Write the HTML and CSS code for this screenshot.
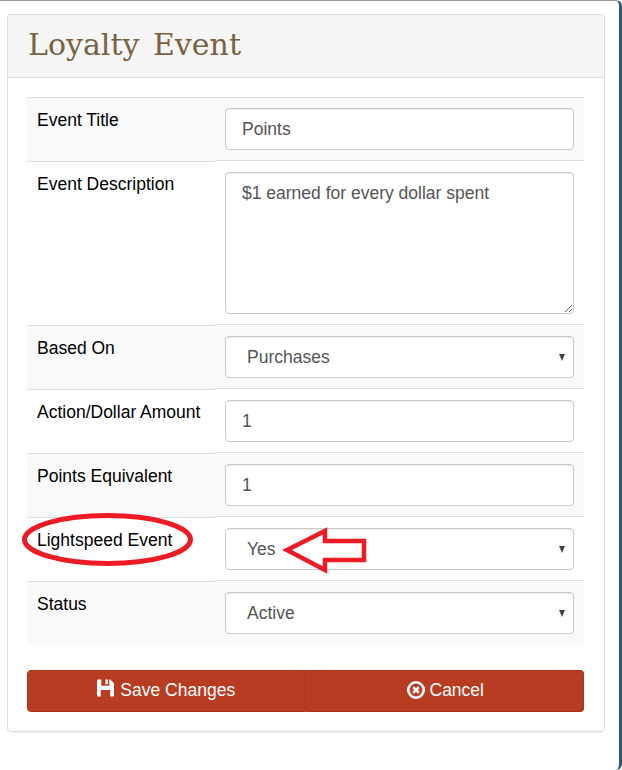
FILE: index.html
```html
<!DOCTYPE html>
<html lang="en">
<head>
<meta charset="utf-8">
<title>Loyalty Event</title>
<link rel="stylesheet" href="styles.css">
</head>
<body>
<div class="window">
  <div class="panel">
    <div class="panel-heading"><h1 class="title">Loyalty Event</h1></div>
    <div class="panel-body">
      <div class="table">
        <div class="row odd"><div class="label">Event Title</div><div class="field"><input class="control" value="Points"></div></div>
        <div class="row"><div class="label">Event Description</div><div class="field"><textarea class="control area">$1 earned for every dollar spent</textarea></div></div>
        <div class="row odd"><div class="label">Based On</div><div class="field"><div class="control select"><span class="sel-text">Purchases</span><span class="caret"></span></div></div></div>
        <div class="row"><div class="label">Action/Dollar Amount</div><div class="field"><input class="control" value="1"></div></div>
        <div class="row odd"><div class="label">Points Equivalent</div><div class="field"><input class="control" value="1"></div></div>
        <div class="row"><div class="label">Lightspeed Event</div><div class="field"><div class="control select"><span class="sel-text">Yes</span><span class="caret"></span></div></div></div>
        <div class="row odd"><div class="label">Status</div><div class="field"><div class="control select"><span class="sel-text">Active</span><span class="caret"></span></div></div></div>
      </div>
      <div class="actions">
        <button class="btn">
          <svg class="icon icon-save" viewBox="0 0 18 18"><path fill="#fff" fill-rule="evenodd" d="M1 0h13l4 4v13a1 1 0 0 1-1 1H1a1 1 0 0 1-1-1V1a1 1 0 0 1 1-1zM4.500 0v6.500h8.500V0h-1.500v5H9V0zM4 11v7h10v-7z"/></svg>
          Save Changes
        </button>
        <button class="btn btn-cancel">
          <svg class="icon icon-cancel" viewBox="0 0 18 18"><circle cx="9" cy="9" r="7.700" fill="none" stroke="#fff" stroke-width="2.600"/><path d="M6.200 6.200l5.600 5.600M11.800 6.200l-5.600 5.600" stroke="#fff" stroke-width="2.600"/></svg>
          Cancel
        </button>
      </div>
    </div>
  </div>
</div>
<svg class="markup" viewBox="0 0 622 770" width="622" height="770">
  <ellipse cx="107.500" cy="539.500" rx="83" ry="24" fill="none" stroke="#ed1c24" stroke-width="5"/>
  <path d="M287 550L325 531V541H364V560H325V570Z" fill="none" stroke="#ed1c24" stroke-width="4.500"/>
</svg>
</body>
</html>
```
FILE: styles.css
```css
* { box-sizing: border-box; }
html, body { margin: 0; padding: 0; background: #fff; }
body { width: 622px; height: 770px; overflow: hidden; position: relative; font-family: "Liberation Sans", Arial, sans-serif; }
.window {
  width: 622px; height: 770px; padding: 13px 14px 0 7px;
  background: #fff; border-top: 1px solid #999; border-right: 3px solid #2a5a7c;
  border-top-right-radius: 6px; border-bottom-right-radius: 6px;
}
.panel { width: 598px; height: 718px; border: 1px solid #ddd; border-radius: 4px; box-shadow: 0 1px 1px rgba(0,0,0,.05); background: #fff; }
.panel-heading { height: 63px; background: #f5f5f5; border-bottom: 1px solid #ddd; border-radius: 3px 3px 0 0; padding-left: 20px; }
.title { margin: 0; font: 400 30px/60px "DejaVu Serif", serif; color: #7a6240; word-spacing: 4px; }
.panel-body { padding: 19px 20px 0 19px; }
.table { width: 557px; }
.row { display: grid; grid-template-columns: 188px 369px; height: 64px; }
.row:nth-child(2) { height: 164px; }
.odd { background: #f9f9f9; }
.label { padding: 11px 0 0 10px; font-size: 17.500px; line-height: 23px; color: #000; border-top: 1px solid #ddd; }
.field { padding: 10px 10px 0 10px; border-top: 1px solid #ddd; }
.row + .row .field { margin-top: -1px; padding-top: 11px; }
.control {
  display: block; width: 349px; height: 42px; padding: 1px 16px 0;
  font: 17.500px "Liberation Sans", Arial, sans-serif; color: #555;
  background: #fff; border: 1px solid #ccc; border-radius: 4px;
  box-shadow: inset 0 1px 1px rgba(0,0,0,.075); outline: 0;
}
.area { height: 142px; padding: 9px 16px; line-height: 22px; resize: vertical; }
.select { display: flex; align-items: center; justify-content: space-between; padding: 1px 8px 0 21px; }
.caret { width: 0; height: 0; border-left: 3.500px solid transparent; border-right: 3.500px solid transparent; border-top: 7px solid #444; }
.actions { display: flex; margin-top: 25px; width: 557px; }
.btn {
  flex: 1 1 50%; height: 42px; display: flex; align-items: center; justify-content: center; gap: 6px;
  font: 17.500px "Liberation Sans", Arial, sans-serif; color: #fff;
  background: #b83c22; border: 1px solid #a83519; border-radius: 0; padding: 0 0 2px;
}
.btn:first-child { border-radius: 4px 0 0 4px; }
.btn:last-child { border-radius: 0 4px 4px 0; border-left: 0; }
.btn-cancel { padding-left: 2px; gap: 5px; }
.icon { width: 17px; height: 18px; }
.icon-save { margin-bottom: 4px; }
.icon-cancel { width: 18px; margin-bottom: 1px; }
.markup { position: absolute; left: 0; top: 0; pointer-events: none; }
```
